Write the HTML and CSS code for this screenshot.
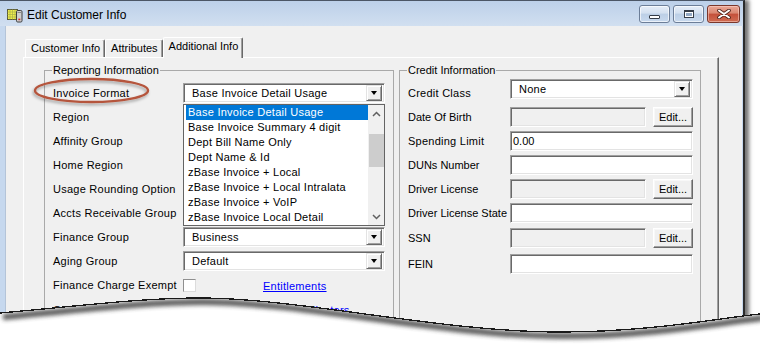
FILE: index.html
```html
<!DOCTYPE html>
<html>
<head>
<meta charset="utf-8">
<title>Edit Customer Info</title>
<link rel="stylesheet" href="styles.css">
</head>
<body>
<div class="window">
  <div class="titlebar">
    <svg class="app-icon" viewBox="0 0 16 16" width="16" height="16">
      <rect x="0.5" y="2.5" width="10" height="10" fill="#f1ef4c" stroke="#5a5a3a"/>
      <path d="M0.5 5h10M0.5 7.5h10M0.5 10h10M3 2.5v10M5.5 2.5v10M8 2.5v10" stroke="#a7b04a" stroke-width="0.7"/>
      <rect x="9.5" y="3.5" width="5.5" height="11.5" rx="1.2" fill="#cfcfcf" stroke="#3e3e3e"/>
      <path d="M10.5 5.5h3.5" stroke="#8a8a8a"/>
      <rect x="11.3" y="11.6" width="2" height="1.6" fill="#d42a2a"/>
    </svg>
    <span class="title">Edit Customer Info</span>
    <div class="caption">
      <div class="cbtn"><span class="min-glyph"></span></div>
      <div class="cbtn"><span class="max-glyph"></span></div>
      <div class="cbtn close">
        <svg width="14" height="10" viewBox="0 0 14 10">
          <path d="M2 1.5 L12 8.5 M12 1.5 L2 8.5" stroke="#4a2018" stroke-width="3.6" stroke-linecap="round"/>
          <path d="M2 1.5 L12 8.5 M12 1.5 L2 8.5" stroke="#ffffff" stroke-width="2" stroke-linecap="round"/>
        </svg>
      </div>
    </div>
  </div>

  <div class="client">
    <div class="tabs">
      <div class="tab">Customer Info</div>
      <div class="tab">Attributes</div>
      <div class="tab active">Additional Info</div>
    </div>

    <div class="panel">
      <fieldset class="group reporting">
        <legend>Reporting Information</legend>
        <div class="form rep-form">
          <span class="lbl ms">Invoice Format</span>
          <div class="combo ms">
            <span class="combo-text">Base Invoice Detail Usage</span>
            <span class="combo-btn"><span class="tri"></span></span>
            <div class="droplist">
              <div class="items">
                <div class="item sel">Base Invoice Detail Usage</div>
                <div class="item">Base Invoice Summary 4 digit</div>
                <div class="item">Dept Bill Name Only</div>
                <div class="item">Dept Name &amp; Id</div>
                <div class="item">zBase Invoice + Local</div>
                <div class="item">zBase Invoice + Local Intralata</div>
                <div class="item">zBase Invoice + VoIP</div>
                <div class="item">zBase Invoice Local Detail</div>
              </div>
              <div class="vscroll">
                <div class="sb-btn">
                  <svg width="9" height="6" viewBox="0 0 9 6"><path d="M1 5 L4.5 1.5 L8 5" fill="none" stroke="#606060" stroke-width="1.5"/></svg>
                </div>
                <div class="sb-track"><div class="sb-thumb"></div></div>
                <div class="sb-btn">
                  <svg width="9" height="6" viewBox="0 0 9 6"><path d="M1 1 L4.5 4.5 L8 1" fill="none" stroke="#606060" stroke-width="1.5"/></svg>
                </div>
              </div>
            </div>
          </div>

          <span class="lbl ms">Region</span><div class="slot"></div>
          <span class="lbl ms">Affinity Group</span><div class="slot"></div>
          <span class="lbl ms">Home Region</span><div class="slot"></div>
          <span class="lbl ms">Usage Rounding Option</span><div class="slot"></div>
          <span class="lbl ms">Accts Receivable Group</span><div class="slot"></div>

          <span class="lbl ms">Finance Group</span>
          <div class="combo ms">
            <span class="combo-text">Business</span>
            <span class="combo-btn"><span class="tri"></span></span>
          </div>

          <span class="lbl ms">Aging Group</span>
          <div class="combo ms">
            <span class="combo-text">Default</span>
            <span class="combo-btn"><span class="tri"></span></span>
          </div>

          <span class="lbl ms">Finance Charge Exempt</span>
          <div class="check-row">
            <span class="checkbox"></span>
            <a class="link ms" href="#">Entitlements</a>
          </div>

          <span class="lbl ms">CSR Group</span>
          <div class="check-row link-only">
            <a class="link ms" href="#">Usage Indicators</a>
          </div>
        </div>
      </fieldset>

      <fieldset class="group credit">
        <legend>Credit Information</legend>
        <div class="form credit-form">
          <span class="lbl ms">Credit Class</span>
          <div class="combo ms raised-row">
            <span class="combo-text">None</span>
            <span class="combo-btn"><span class="tri"></span></span>
          </div>

          <span class="lbl">Date Of Birth</span>
          <div class="pair"><span class="input disabled"></span><span class="btn">Edit...</span></div>

          <span class="lbl ms">Spending Limit</span>
          <span class="input">0.00</span>

          <span class="lbl">DUNs Number</span>
          <span class="input"></span>

          <span class="lbl">Driver License</span>
          <div class="pair"><span class="input disabled"></span><span class="btn">Edit...</span></div>

          <span class="lbl">Driver License State</span>
          <span class="input"></span>

          <span class="lbl">SSN</span>
          <div class="pair"><span class="input disabled"></span><span class="btn">Edit...</span></div>

          <span class="lbl">FEIN</span>
          <span class="input"></span>
        </div>
      </fieldset>
    </div>
  </div>
</div>

<svg class="mark" width="126" height="36" viewBox="0 0 126 36">
  <defs>
    <filter id="ms" x="-20%" y="-50%" width="140%" height="200%">
      <feDropShadow dx="-1" dy="2" stdDeviation="1.8" flood-color="#000" flood-opacity="0.35"/>
    </filter>
  </defs>
  <ellipse cx="61.5" cy="16.5" rx="56.5" ry="11.5" fill="none" stroke="#b5553c" stroke-width="2.4" filter="url(#ms)"/>
</svg>

<svg class="tear" width="760" height="69" viewBox="0 0 760 69">
  <defs>
    <clipPath id="below">
      <path d="M0 33 C80 26 140 18 200 18 C300 18 440 52 560 52 C650 52 720 38 760 34 L760 69 L0 69 Z"/>
    </clipPath>
    <filter id="blur" x="-5%" y="-100%" width="110%" height="300%">
      <feGaussianBlur stdDeviation="2"/>
    </filter>
  </defs>
  <path d="M0 33 C80 26 140 18 200 18 C300 18 440 52 560 52 C650 52 720 38 760 34 L760 69 L0 69 Z" fill="#ffffff"/>
  <g clip-path="url(#below)">
    <path d="M0 33 C80 26 140 18 200 18 C300 18 440 52 560 52 C650 52 720 38 760 34" transform="translate(3 4)" fill="none" stroke="#3a3a3a" stroke-width="6" filter="url(#blur)" opacity="0.85"/>
  </g>
  <path d="M0 33 C80 26 140 18 200 18 C300 18 440 52 560 52 C650 52 720 38 760 34" fill="none" stroke="#1a1a1a" stroke-width="1.3" shape-rendering="crispEdges"/>
</svg>
</body>
</html>
```

FILE: styles.css
```css
* { box-sizing: border-box; }

html, body { margin: 0; padding: 0; }

body {
  position: relative;
  width: 760px;
  height: 349px;
  overflow: hidden;
  background: #ffffff;
  font-family: "Liberation Sans", Arial, sans-serif;
  font-size: 11px;
  color: #000;
}

.window {
  position: relative;
  width: 745px;
  height: 349px;
  display: flex;
  flex-direction: column;
  border-top: 1px solid #4b5666;
  border-right: 2px solid #2c2c2c;
  background: #c6d8ee;
  box-shadow: 4px 0 4px rgba(0, 0, 0, 0.55);
}

/* title bar */
.titlebar {
  flex: none;
  height: 25px;
  display: flex;
  align-items: center;
  padding: 2px 3px 0 7px;
  background: linear-gradient(#bcd0e9, #d1dff0);
}

.app-icon { flex: none; margin-right: 4px; }

.title {
  font-size: 12px;
  color: #000;
}

.caption {
  margin-left: auto;
  align-self: flex-start;
  margin-top: 2px;
  display: flex;
  gap: 3px;
}

.cbtn {
  width: 31px;
  height: 18px;
  border: 1px solid #6c7e98;
  border-radius: 3px;
  background: linear-gradient(#e6eef8 0%, #d3e0f0 45%, #bccfe6 50%, #c8d9ee 100%);
  box-shadow: inset 0 0 0 1px rgba(255, 255, 255, 0.65);
  display: flex;
  align-items: center;
  justify-content: center;
}

.cbtn.close {
  width: 33px;
  border-color: #7b372b;
  background: linear-gradient(#eaa796 0%, #d98670 45%, #c4503a 50%, #cf6c52 100%);
  box-shadow: inset 0 0 0 1px rgba(255, 220, 210, 0.5);
}

.min-glyph {
  width: 11px;
  height: 4px;
  margin-top: 5px;
  border: 1px solid #353d48;
  border-radius: 1px;
  background: #ffffff;
}

.max-glyph {
  width: 10px;
  height: 8px;
  border: 1px solid #353d48;
  box-shadow: inset 0 0 0 1px #ffffff;
  background: #93a9c4;
  border-top-width: 2px;
}

/* client */
.client {
  flex: 1;
  margin: 0 1px 0 5px;
  padding: 11px 0 0 17px;
  background: #f0f0f0;
  border-left: 1px solid #b4c4d8;
}

.tabs {
  height: 20px;
  display: flex;
  align-items: flex-end;
  padding-left: 2px;
}

.tab {
  height: 18px;
  line-height: 17px;
  padding: 0 4px 0 5px;
  border-top: 1px solid #ffffff;
  border-left: 1px solid #ffffff;
  border-right: 1px solid #696969;
  box-shadow: inset -1px 0 0 #a0a0a0;
  border-radius: 2px 2px 0 0;
  background: #f0f0f0;
  white-space: nowrap;
}

.tab.active {
  position: relative;
  z-index: 1;
  height: 21px;
  line-height: 16px;
  margin-bottom: -1px;
}

.panel {
  width: 696px;
  height: 282px;
  display: flex;
  align-items: flex-start;
  padding: 6px 0 0 20px;
  border-top: 1px solid #ffffff;
  border-left: 1px solid #ffffff;
  border-right: 1px solid #696969;
  border-bottom: 1px solid #696969;
  box-shadow: inset -1px -1px 0 #a0a0a0;
}

/* group boxes */
.group {
  margin: 0;
  padding: 0 6px 0 8px;
  border: 1px solid #a9a9a9;
  height: 272px;
  min-width: 0;
}

.group legend {
  padding: 0 1px;
  margin-left: -1px;
  line-height: 13px;
}

.reporting { width: 350px; }

.credit { width: 302px; margin-left: 5px; }

.form {
  display: grid;
  margin-top: 4px;
  align-items: center;
}

.rep-form {
  grid-template-columns: 130px 202px;
  grid-template-rows: 24px 24px 24px 24px 24px 24px 24px 24px 25px 24px;
}

.credit-form {
  grid-template-columns: 102px 183px;
  grid-template-rows: 24px 24px 24px 24px 24px 24px 26px 26px;
}

.ms { letter-spacing: 0.25px; }

.lbl {
  line-height: 13px;
  white-space: nowrap;
}

.slot { height: 20px; }

/* combo */
.combo {
  position: relative;
  height: 20px;
  display: flex;
  align-items: center;
  background: #ffffff;
  border: 1px solid;
  border-color: #a0a0a0 #ffffff #ffffff #a0a0a0;
  box-shadow: inset 1px 1px 0 #696969, inset -1px -1px 0 #e3e3e3;
  padding: 2px;
}

.raised-row { align-self: start; margin-top: -2px; }

.combo-text {
  flex: 1;
  padding-left: 6px;
  white-space: nowrap;
  line-height: 14px;
}

.combo-btn {
  width: 16px;
  height: 16px;
  flex: none;
  display: flex;
  align-items: center;
  justify-content: center;
  background: #f0f0f0;
  border: 1px solid;
  border-color: #e3e3e3 #696969 #696969 #e3e3e3;
  box-shadow: inset 1px 1px 0 #ffffff, inset -1px -1px 0 #a0a0a0;
}

.tri {
  width: 0;
  height: 0;
  border-left: 3.5px solid transparent;
  border-right: 3.5px solid transparent;
  border-top: 4px solid #000;
}

/* drop list overlay */
.droplist {
  position: absolute;
  top: 20px;
  left: -1px;
  width: 202px;
  height: 122px;
  z-index: 5;
  display: flex;
  background: #ffffff;
  border: 1px solid #646464;
}

.items {
  width: 184px;
  padding-left: 2px;
}

.item {
  height: 15px;
  line-height: 15px;
  padding-left: 2px;
  white-space: nowrap;
}

.item.sel {
  background: #0078d7;
  color: #ffffff;
}

.vscroll {
  width: 16px;
  display: flex;
  flex-direction: column;
  background: #f0f0f0;
}

.sb-btn {
  height: 17px;
  display: flex;
  align-items: center;
  justify-content: center;
}

.sb-track {
  flex: 1;
  padding-top: 12px;
}

.sb-thumb {
  height: 33px;
  margin-left: 1px;
  background: #cdcdcd;
}

/* checkbox + link rows */
.check-row {
  display: flex;
  align-items: center;
}

.checkbox {
  width: 13px;
  height: 13px;
  background: #ffffff;
  border: 1px solid;
  border-color: #8f8f8f #dcdcdc #dcdcdc #8f8f8f;
}

.check-row .link { margin-left: 67px; }

.link-only { padding-left: 80px; }

.link-only .link { margin-left: 0; }

.link {
  color: #0000ff;
  text-decoration: underline;
  white-space: nowrap;
}

/* text inputs and buttons */
.input {
  display: block;
  height: 20px;
  line-height: 16px;
  padding: 1px 2px;
  background: #ffffff;
  border: 1px solid;
  border-color: #a0a0a0 #ffffff #ffffff #a0a0a0;
  box-shadow: inset 1px 1px 0 #696969, inset -1px -1px 0 #e3e3e3;
  white-space: nowrap;
}

.input.disabled { background: #f0f0f0; }

.pair {
  display: flex;
  gap: 7px;
}

.pair .input { width: 136px; }

.btn {
  width: 40px;
  height: 20px;
  display: flex;
  align-items: center;
  justify-content: center;
  background: #f0f0f0;
  border: 1px solid;
  border-color: #ffffff #696969 #696969 #ffffff;
  box-shadow: inset -1px -1px 0 #a0a0a0, inset 1px 1px 0 #f8f8f8;
}

/* overlays */
.mark {
  position: absolute;
  left: 30px;
  top: 74px;
  pointer-events: none;
}

.tear {
  position: absolute;
  left: 0;
  top: 280px;
  pointer-events: none;
}
```
